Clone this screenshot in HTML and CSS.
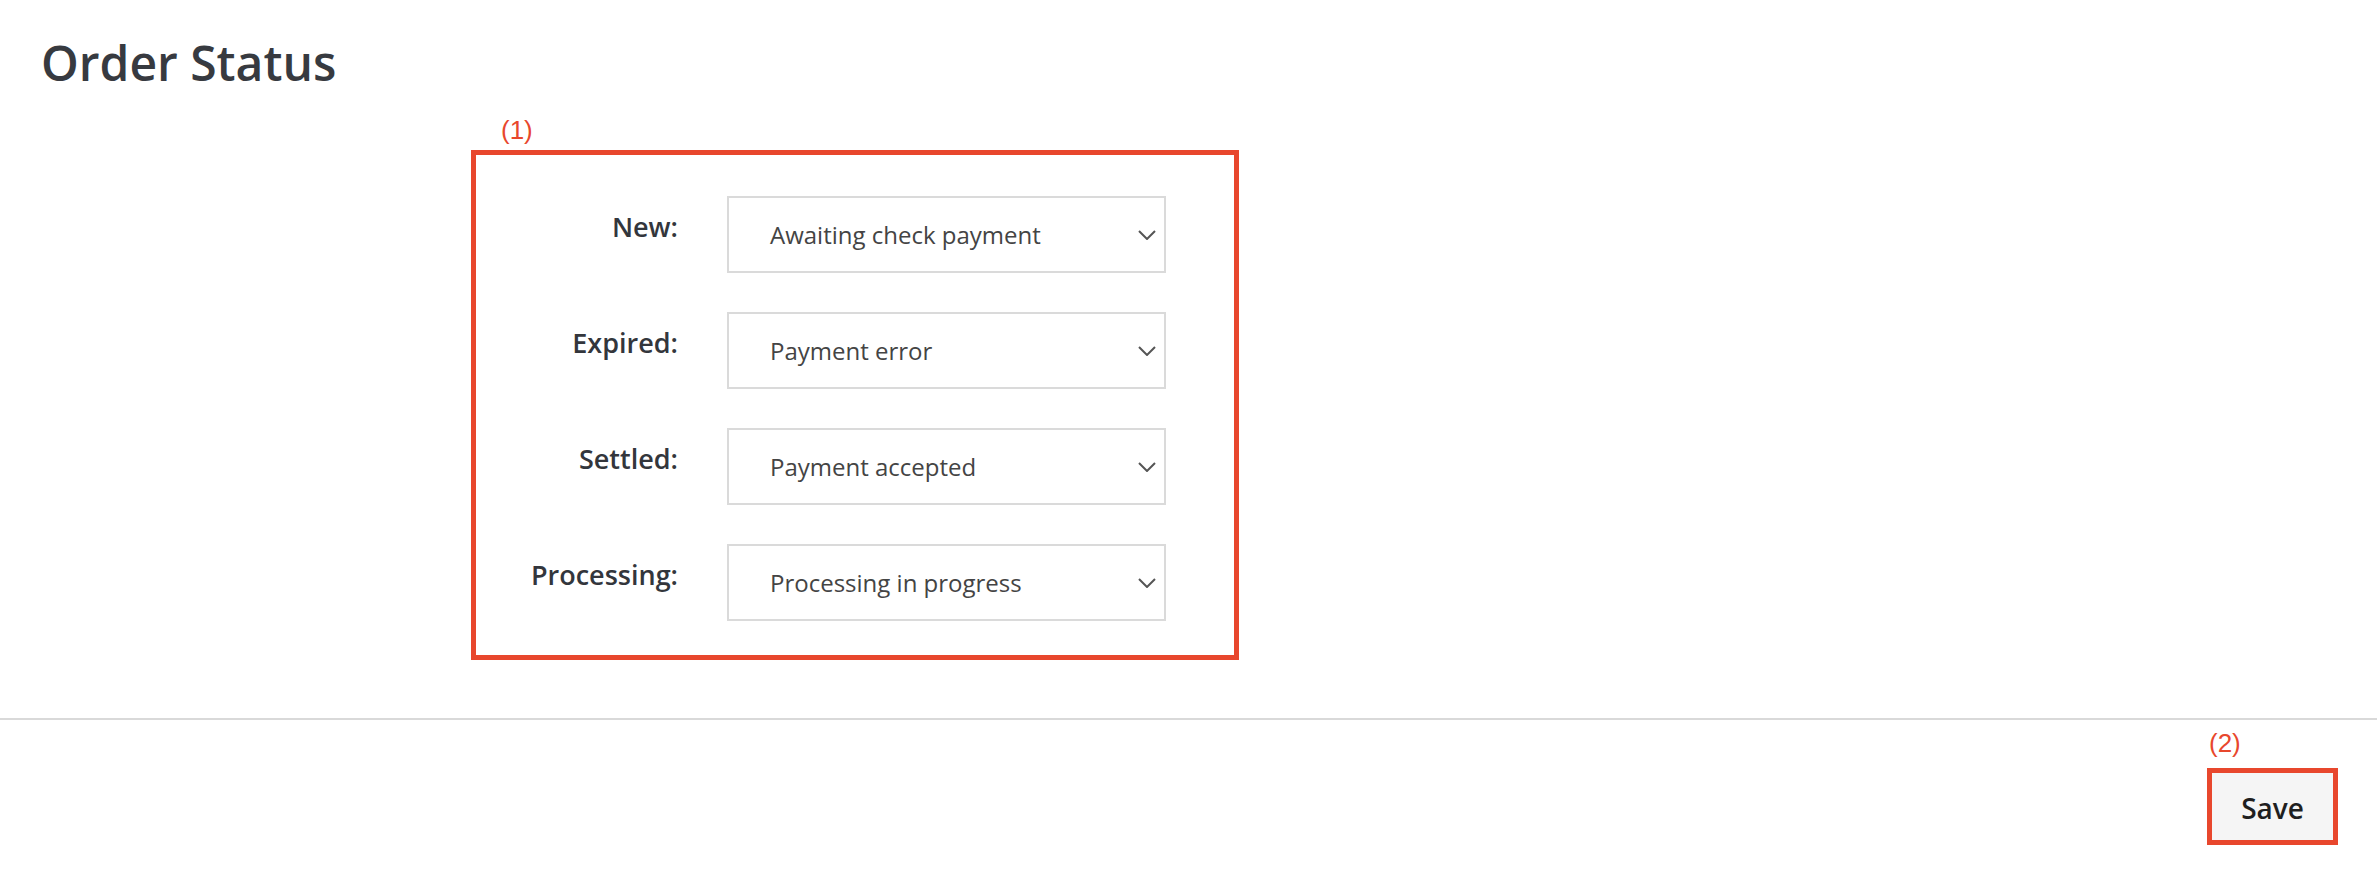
FILE: index.html
```html
<!DOCTYPE html>
<html lang="en">
<head>
<meta charset="utf-8">
<title>Order Status</title>
<link rel="stylesheet" href="styles.css">
</head>
<body>
<header class="page-header">
  <h1 class="page-title">Order Status</h1>
</header>
<main class="content">
  <div class="annotated">
    <div class="note">(1)</div>
    <div class="highlight">
      <div class="form-grid">
        <label class="field-label">New:</label>
        <div class="select"><span class="select-value">Awaiting check payment</span><svg class="chevron" viewBox="0 0 18 10" width="18" height="10"><path d="M1 1l8 8 8-8" fill="none" stroke="#555" stroke-width="2"/></svg></div>

        <label class="field-label">Expired:</label>
        <div class="select"><span class="select-value">Payment error</span><svg class="chevron" viewBox="0 0 18 10" width="18" height="10"><path d="M1 1l8 8 8-8" fill="none" stroke="#555" stroke-width="2"/></svg></div>

        <label class="field-label">Settled:</label>
        <div class="select"><span class="select-value">Payment accepted</span><svg class="chevron" viewBox="0 0 18 10" width="18" height="10"><path d="M1 1l8 8 8-8" fill="none" stroke="#555" stroke-width="2"/></svg></div>

        <label class="field-label">Processing:</label>
        <div class="select"><span class="select-value">Processing in progress</span><svg class="chevron" viewBox="0 0 18 10" width="18" height="10"><path d="M1 1l8 8 8-8" fill="none" stroke="#555" stroke-width="2"/></svg></div>
      </div>
    </div>
  </div>
</main>
<footer class="actions">
  <div class="action-item">
    <div class="note note-small">(2)</div>
    <button class="save-btn" type="button">Save</button>
  </div>
</footer>
</body>
</html>
```
FILE: styles.css
```css
html, body {
  margin: 0;
  padding: 0;
  background: #ffffff;
}

body {
  font-family: "Open Sans", "Noto Sans", sans-serif;
  color: #33363c;
}

.page-header {
  padding: 33px 0 0 41px;
}

.page-title {
  margin: 0;
  font-size: 48px;
  line-height: 60px;
  font-weight: 600;
  color: #373a40;
}

.content {
  padding: 24px 0 0 471px;
}

.annotated {
  display: flex;
  flex-direction: column;
  align-items: flex-start;
}

.note {
  font-family: "Liberation Sans", Arial, sans-serif;
  font-size: 26px;
  line-height: 26px;
  color: #e8472d;
  margin: 0 0 7px 30px;
}

.highlight {
  width: 758px;
  border: 5px solid #e8472d;
  padding: 41px 0 34px 0;
}

.form-grid {
  display: grid;
  grid-template-columns: 202px 439px;
  column-gap: 49px;
  row-gap: 39px;
}

.field-label {
  text-align: right;
  font-size: 27px;
  line-height: 34px;
  font-weight: 600;
  color: #33363c;
  padding-top: 14px;
}

.select {
  box-sizing: border-box;
  height: 77px;
  border: 2px solid #dadada;
  display: flex;
  align-items: center;
  justify-content: space-between;
  padding: 0 8px 0 41px;
  background: #fff;
}

.select-value {
  font-size: 24px;
  color: #444444;
}

.chevron {
  display: block;
  flex: none;
}

.actions {
  margin-top: 58px;
  border-top: 2px solid #d9d9d9;
  display: flex;
  justify-content: flex-end;
  padding: 10px 39px 0 0;
}

.action-item {
  display: flex;
  flex-direction: column;
  align-items: flex-start;
}

.note-small {
  margin: 0 0 12px 2px;
}

.save-btn {
  box-sizing: border-box;
  width: 131px;
  height: 77px;
  border: 5px solid #e8472d;
  background: #f5f5f5;
  box-shadow: 0 2px 0 #333333;
  font-family: "Open Sans", "Noto Sans", sans-serif;
  font-size: 28px;
  font-weight: 600;
  color: #1f1f1f;
  padding: 2px 0 0 0;
  cursor: pointer;
}
```
